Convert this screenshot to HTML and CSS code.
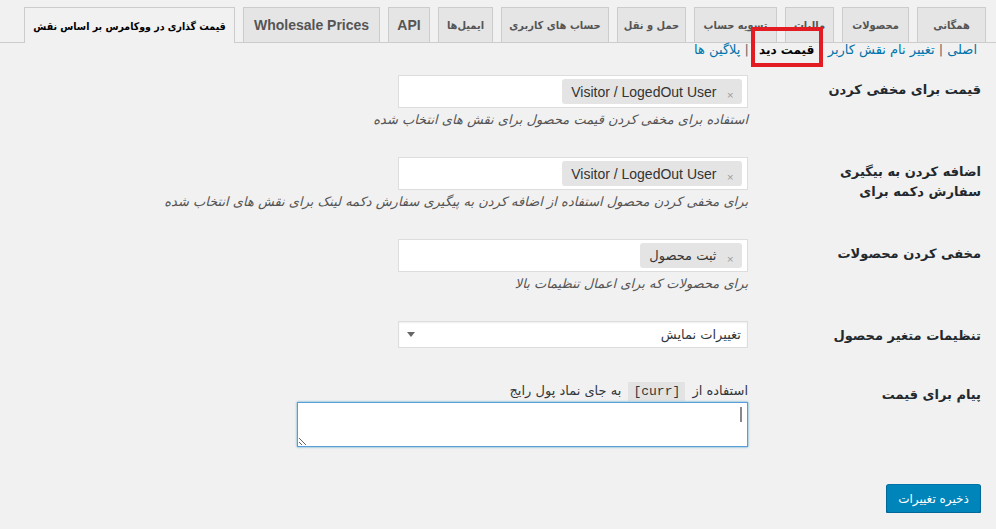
FILE: index.html
```html
<!DOCTYPE html>
<html lang="fa" dir="rtl">
<head>
  <meta charset="UTF-8">
  <meta name="viewport" content="width=device-width, initial-scale=1.0">
  <title>قیمت گذاری در ووکامرس بر اساس نقش</title>
  <link rel="stylesheet" href="styles.css">
</head>
<body>
  <div class="wrap">
    <nav class="nav-tabs">
      <a class="nav-tab">همگانی</a>
      <a class="nav-tab">محصولات</a>
      <a class="nav-tab">مالیات</a>
      <a class="nav-tab">تسویه حساب</a>
      <a class="nav-tab">حمل و نقل</a>
      <a class="nav-tab">حساب های کاربری</a>
      <a class="nav-tab">ایمیل‌ها</a>
      <a class="nav-tab latin">API</a>
      <a class="nav-tab latin">Wholesale Prices</a>
      <a class="nav-tab active">قیمت گذاری در ووکامرس بر اساس نقش</a>
    </nav>

    <ul class="subsubsub">
      <li><a href="#">اصلی</a> |</li>
      <li><a href="#">تغییر نام نقش کاربر</a> |</li>
      <li><a href="#" class="current">قیمت دید</a> |</li>
      <li><a href="#">پلاگین ها</a></li>
    </ul>

    <form class="settings">
      <div class="row">
        <div class="label">قیمت برای مخفی کردن</div>
        <div class="field">
          <div class="multi">
            <span class="choice"><span class="remove">×</span><span class="latin-text">Visitor / LogedOut User</span></span>
          </div>
          <p class="desc">استفاده برای مخفی کردن قیمت محصول برای نقش های انتخاب شده</p>
        </div>
      </div>

      <div class="row">
        <div class="label">اضافه کردن به بیگیری<br>سفارش دکمه برای</div>
        <div class="field">
          <div class="multi">
            <span class="choice"><span class="remove">×</span><span class="latin-text">Visitor / LogedOut User</span></span>
          </div>
          <p class="desc">برای مخفی کردن محصول استفاده از اضافه کردن به پیگیری سفارش دکمه لینک برای نقش های انتخاب شده</p>
        </div>
      </div>

      <div class="row">
        <div class="label">مخفی کردن محصولات</div>
        <div class="field">
          <div class="multi">
            <span class="choice"><span class="remove">×</span><span>ثبت محصول</span></span>
          </div>
          <p class="desc">برای محصولات که برای اعمال تنظیمات بالا</p>
        </div>
      </div>

      <div class="row row-select">
        <div class="label">تنظیمات متغیر محصول</div>
        <div class="field">
          <div class="select">
            <span>تغییرات نمایش</span>
            <svg width="8" height="5" viewBox="0 0 8 5"><path d="M0 0h8L4 5z" fill="#666"/></svg>
          </div>
        </div>
      </div>

      <div class="row row-text">
        <div class="label">پیام برای قیمت</div>
        <div class="field">
          <p class="help">استفاده از <code>[curr]</code> به جای نماد پول رایج</p>
          <div class="textarea-wrap">
            <textarea class="message" rows="2"></textarea>
            <span class="caret"></span>
          </div>
        </div>
      </div>

      <div class="actions">
        <button type="button" class="save">ذخیره تغییرات</button>
      </div>
    </form>
  </div>
</body>
</html>
```

FILE: styles.css
```css
body {
  margin: 0;
  background-color: #f1f1f1;
  font-family: "DejaVu Sans", sans-serif;
  font-size: 13px;
  color: #23282d;
}

.wrap {
  direction: rtl;
}

/* tabs */
.nav-tabs {
  display: flex;
  gap: 8px;
  padding: 7px 10px 0 0;
  border-bottom: 1px solid #ccc;
}

.nav-tab {
  display: flex;
  align-items: center;
  justify-content: center;
  height: 35px;
  box-sizing: border-box;
  border: 1px solid #ccc;
  border-bottom: none;
  background-color: #e5e5e5;
  color: #555;
  font-family: "DejaVu Sans Condensed", "DejaVu Sans", sans-serif;
  font-size: 11px;
  font-weight: bold;
  white-space: nowrap;
}

.nav-tab:nth-child(1) { width: 69px; }
.nav-tab:nth-child(2) { width: 67px; }
.nav-tab:nth-child(3) { width: 49px; }
.nav-tab:nth-child(4) { width: 83px; }
.nav-tab:nth-child(5) { width: 69px; }
.nav-tab:nth-child(6) { width: 108px; }
.nav-tab:nth-child(7) { width: 55px; }
.nav-tab:nth-child(8) { width: 42px; }
.nav-tab:nth-child(9) { width: 137px; }
.nav-tab:nth-child(10) { width: 211px; }

.nav-tab.latin {
  font-family: "Liberation Sans", Arial, sans-serif;
  font-size: 14px;
}

.nav-tab.active {
  background-color: #f1f1f1;
  color: #000;
  font-size: 10.5px;
  height: 36px;
  margin-bottom: -1px;
}

/* sub links */
.subsubsub {
  list-style: none;
  margin: 0;
  padding: 0 19px 0 0;
  display: flex;
  gap: 4px;
  font-size: 13px;
  line-height: 14px;
  color: #666;
}

.subsubsub li {
  white-space: nowrap;
}

.subsubsub a {
  color: #0073aa;
  text-decoration: none;
}

.subsubsub a.current {
  position: relative;
  display: inline-block;
  color: #000;
  font-weight: bold;
  font-size: 12px;
  margin: 0 1px 0 6px;
}

.subsubsub a.current::after {
  content: "";
  position: absolute;
  top: -16px;
  bottom: -10px;
  left: -8px;
  right: -9px;
  border: 4px solid #e31b23;
}

/* form */
.settings {
  padding: 0 15px 0 0;
  margin-top: 4px;
}

.row {
  display: grid;
  grid-template-columns: 233px 1fr;
  padding: 14px 0;
}

.label {
  padding-top: 5px;
  font-size: 13px;
  font-weight: bold;
  line-height: 20px;
  color: #23282d;
}

.field {
  display: flex;
  flex-direction: column;
  align-items: flex-start;
}

.multi {
  width: 350px;
  height: 33px;
  box-sizing: border-box;
  padding: 3px 5px 0;
  border: 1px solid #ddd;
  background-color: #fff;
  display: flex;
}

.choice {
  display: flex;
  align-items: center;
  gap: 10px;
  height: 25px;
  padding: 0 8px 0 9px;
  border-radius: 3px;
  background-color: #e4e4e4;
  color: #333;
  font-size: 13px;
}

.latin-text {
  font-family: "Liberation Sans", Arial, sans-serif;
  font-size: 14px;
}

.remove {
  font-size: 9px;
  color: #999;
  padding-top: 6px;
}

.desc {
  margin: 3px 0 0;
  font-size: 13px;
  line-height: 18px;
  font-style: italic;
  color: #555;
  white-space: nowrap;
}

.row-select {
  padding-bottom: 18px;
}

.select {
  width: 350px;
  height: 27px;
  box-sizing: border-box;
  padding: 0 6px 0 8px;
  border: 1px solid #ddd;
  background-color: #fff;
  box-shadow: inset 0 1px 2px rgba(0, 0, 0, 0.07);
  display: flex;
  align-items: center;
  justify-content: space-between;
  font-size: 13px;
  color: #32373c;
}

.help {
  margin: 2px 0 0;
  font-size: 13px;
  line-height: 18px;
  color: #32373c;
}

.help code {
  font-family: "Liberation Mono", monospace;
  font-size: 13px;
  background-color: #e3e3e3;
  padding: 2px 5px;
  margin: 0 3px;
}

.textarea-wrap {
  position: relative;
  margin-top: 1px;
}

.message {
  display: block;
  width: 451px;
  height: 45px;
  box-sizing: border-box;
  border: 1px solid #5b9dd9;
  box-shadow: 0 0 2px rgba(30, 140, 190, 0.8);
  background-color: #fff;
  outline: none;
  resize: both;
  margin: 0;
}

.caret {
  position: absolute;
  top: 5px;
  right: 6px;
  width: 2px;
  height: 15px;
  background-color: #888;
}

.actions {
  padding: 23px 0 0 0;
}

.save {
  width: 95px;
  height: 29px;
  background-color: #0085ba;
  border: 1px solid #0073aa;
  border-color: #0073aa #006799 #006799;
  border-radius: 3px;
  box-shadow: 0 1px 0 #006799;
  color: #fff;
  font-family: "DejaVu Sans", sans-serif;
  font-size: 12px;
  cursor: pointer;
}
```
